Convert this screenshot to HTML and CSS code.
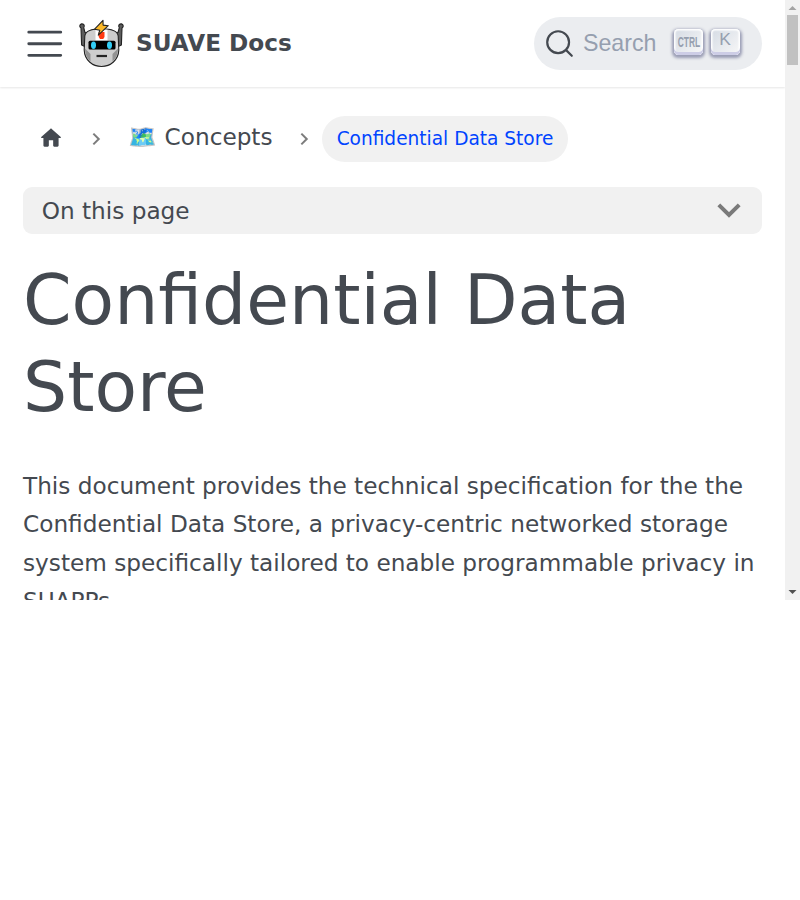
FILE: index.html
```
<!DOCTYPE html>
<html lang="en">
<head>
<meta charset="utf-8">
<title>Confidential Data Store | SUAVE Docs</title>
<link rel="stylesheet" href="styles.css">
</head>
<body>
<div class="viewport">
  <div class="page">
    <header class="navbar">
      <svg class="menu" viewBox="0 0 30 30"><path stroke="currentColor" stroke-linecap="round" stroke-miterlimit="10" stroke-width="2" d="M4 7h22M4 15h22M4 23h22"/></svg>
      <svg class="logo" viewBox="0 0 46 50" stroke="#222" stroke-width="1.1" stroke-linejoin="round">
        <path fill="#5c5c5c" d="M3 9A2.200 2.200 0 1 1 5.700 8.500L6.800 13 10 16v13L3.600 26Z"/>
        <path fill="#5c5c5c" d="M44 9A2.200 2.200 0 1 0 41.300 8.500L40.200 13 37 16v13L43.400 26Z"/>
        <path fill="#cdcdcd" d="M6.800 17C7.500 11.500 13 9.800 23.500 9.800S39.500 11.500 40.200 17L40.800 31C40.500 41 32.500 47.500 23.500 47.500S6.500 41 6.200 31Z"/>
        <path fill="#939393" stroke="none" d="M6.900 29.500L12.500 35v7.500C9 39.500 7.200 35.500 6.900 29.500ZM40.100 29.500L34.500 35v7.500c3.500-3 5.300-7 5.600-13Z"/>
        <path fill="#fff" stroke="none" d="M17.500 10.600h12V21.500h-12Z"/>
        <path fill="#ff3a12" stroke="none" d="M20.700 13h5.800v5l-1.300 2h-3.200l-1.300-2Z"/>
        <rect x="10.500" y="21.800" width="27" height="8.600" rx="1.500" fill="#000" stroke="none"/>
        <ellipse cx="15.500" cy="26.200" rx="2.500" ry="3.700" fill="#32cdf5" stroke="none"/>
        <ellipse cx="31.500" cy="26.200" rx="2.500" ry="3.700" fill="#32cdf5" stroke="none"/>
        <path fill="none" stroke-width="2.200" d="M18.500 37h10.500"/>
        <path fill="#fcb929" d="M25 1.300L16.600 10.200l5.200 1L20.300 16.200 30.300 6.700l-5.200-.6Z"/>
      </svg>
      <b class="brand">SUAVE Docs</b>
      <div class="search">
        <svg class="glass" viewBox="0 0 20 20"><path d="M14.386 14.386l4.0877 4.0877-4.0877-4.0877c-2.9418 2.9419-7.7115 2.9419-10.6533 0-2.9419-2.9418-2.9419-7.7115 0-10.6533 2.9418-2.9419 7.7115-2.9419 10.6533 0 2.9419 2.9418 2.9419 7.7115 0 10.6533z" stroke="currentColor" stroke-width="1.5" fill="none" fill-rule="evenodd" stroke-linecap="round" stroke-linejoin="round"/></svg>
        <span class="placeholder">Search</span>
        <kbd class="key"><span class="ctrl">CTRL</span></kbd>
        <kbd class="key">K</kbd>
      </div>
    </header>
    <main class="content">
      <nav class="crumbs">
        <svg class="home" viewBox="0 0 24 24"><path d="M10 19v-5h4v5c0 .55.45 1 1 1h3c.55 0 1-.45 1-1v-7h1.700c.46 0 .68-.57.33-.87L12.670 3.600c-.38-.34-.96-.34-1.340 0l-8.360 7.530c-.34.300-.13.870.330.870H5v7c0 .55.45 1 1 1h3c.55 0 1-.45 1-1z" fill="currentColor"/></svg>
        <svg class="sep sep-first" viewBox="0 0 8 12"><path d="M1.200 1.200L6 6l-4.800 4.800"/></svg>
        <span class="concepts">🗺️ Concepts</span>
        <svg class="sep sep-second" viewBox="0 0 8 12"><path d="M1.200 1.200L6 6l-4.800 4.800"/></svg>
        <span class="current">Confidential Data Store</span>
      </nav>
      <div class="toc">
        <span class="toc-label">On this page</span>
        <svg class="chevron" viewBox="0 0 24 15"><path d="M1.800 1.800L12 12 22.200 1.800"/></svg>
      </div>
      <h1>Confidential Data Store</h1>
      <p>This document provides the technical specification for the the Confidential Data Store, a privacy-centric networked storage system specifically tailored to enable programmable privacy in SUAPPs.</p>
    </main>
  </div>
  <div class="scrollbar">
    <svg class="arrow up" viewBox="0 0 15 15"><path d="M3.500 10L7.500 6l4 4Z"/></svg>
    <div class="thumb"></div>
    <svg class="arrow down" viewBox="0 0 15 15"><path d="M3.500 5L7.500 9l4-4Z"/></svg>
  </div>
</div>
</body>
</html>
```
FILE: styles.css
```
* { box-sizing: border-box; }
body {
  margin: 0;
  background: #fff;
  color: #444950;
  font: 23.2px/38.3px "DejaVu Sans", sans-serif;
}
svg { display: block; flex: none; }
.viewport { display: flex; height: 600px; overflow: hidden; }
.page { width: 785px; overflow: hidden; }
.navbar {
  display: flex;
  align-items: center;
  height: 87px;
  padding: 0 23px;
  box-shadow: 0 1px 2px rgba(0, 0, 0, .1);
}
.menu { width: 43.500px; height: 43.500px; }
.logo { width: 46px; height: 50px; margin-left: 11.500px; }
.brand { margin-left: 12px; padding-bottom: 2px; line-height: 1; white-space: nowrap; }
.search {
  display: flex;
  align-items: center;
  width: 228px;
  height: 53px;
  margin-left: auto;
  padding-left: 11px;
  border-radius: 27px;
  background: #ebedf0;
  color: #969faf;
  font-family: "Liberation Sans", sans-serif;
}
.glass { width: 29px; height: 29px; color: #444950; }
.placeholder { width: 73px; margin: 0 18px 0 9px; line-height: 1; }
.key {
  display: flex;
  justify-content: center;
  width: 29px;
  height: 26px;
  margin: 0 7.500px 3px 0;
  border-radius: 4.400px;
  background: linear-gradient(-225deg, #d5dbe4, #f8f8f8);
  box-shadow: inset 0 -3px 0 #cdcde6, inset 0 0 1.500px 1.500px #fff, 0 1.500px 3px 1.500px rgba(30, 35, 90, .4);
  font: 17.400px/21px "Liberation Sans", sans-serif;
}
.ctrl { font-size: 15px; line-height: 25px; font-weight: bold; transform: scaleX(.56); }
.content { padding: 29px 23px 0; }
.crumbs { display: flex; align-items: center; height: 46px; }
.home { width: 26px; height: 26px; margin-left: 14.500px; margin-top: -3px; }
.sep { width: 9px; height: 14px; fill: none; stroke: #7c7c7c; stroke-width: 1.800; }
.sep-first { margin-left: 28px; }
.concepts { width: 143px; margin-left: 27.700px; margin-top: -3px; white-space: nowrap; }
.sep-second { margin-left: 29.300px; }
.current {
  width: 246px;
  height: 46px;
  margin-left: 12.500px;
  border-radius: 23px;
  background: #f1f1f1;
  color: #0044ff;
  font-size: 18.560px;
  line-height: 45px;
  text-align: center;
  white-space: nowrap;
}
.toc {
  display: flex;
  align-items: center;
  justify-content: space-between;
  height: 47px;
  margin-top: 25px;
  padding: 0 21.500px 0 18.700px;
  border-radius: 9px;
  background: #f1f1f1;
}
.toc-label { padding-top: 1px; }
.chevron { width: 24px; height: 15px; fill: none; stroke: #7a7a7a; stroke-width: 4; }
h1 { margin: 22px 0 37px; font-size: 69.600px; font-weight: 400; line-height: 87px; }
p { margin: 0; }
.scrollbar {
  display: flex;
  flex-direction: column;
  align-items: center;
  width: 15px;
  background: #f1f1f1;
}
.arrow { width: 15px; height: 15px; }
.up { fill: #a3a3a3; }
.down { margin-top: auto; fill: #505050; }
.thumb { width: 11px; height: 50px; background: #c1c1c1; }
```
